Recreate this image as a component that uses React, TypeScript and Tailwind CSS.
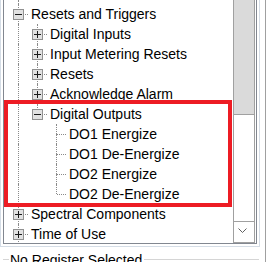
import React from 'react';

type Row = {
  label: string;
  guides: boolean[]; // ancestor columns: draw a full vertical line?
  box?: 'plus' | 'minus';
  hasNext: boolean;
};

const rows: Row[] = [
  { label: 'Resets and Triggers', guides: [], box: 'minus', hasNext: true },
  { label: 'Digital Inputs', guides: [true], box: 'plus', hasNext: true },
  { label: 'Input Metering Resets', guides: [true], box: 'plus', hasNext: true },
  { label: 'Resets', guides: [true], box: 'plus', hasNext: true },
  { label: 'Acknowledge Alarm', guides: [true], box: 'plus', hasNext: true },
  { label: 'Digital Outputs', guides: [true], box: 'minus', hasNext: false },
  { label: 'DO1 Energize', guides: [true, false], hasNext: true },
  { label: 'DO1 De-Energize', guides: [true, false], hasNext: true },
  { label: 'DO2 Energize', guides: [true, false], hasNext: true },
  { label: 'DO2 De-Energize', guides: [true, false], hasNext: false },
  { label: 'Spectral Components', guides: [], box: 'plus', hasNext: true },
  { label: 'Time of Use', guides: [], box: 'plus', hasNext: true },
];

const Guide = ({ full }: { full: boolean }) => (
  <div className="relative w-[19px] h-full shrink-0">
    {full && <div className="absolute left-[9px] top-0 h-full border-l border-dotted border-[#8a8a8a]" />}
  </div>
);

const Joint = ({ box, hasNext }: { box?: 'plus' | 'minus'; hasNext: boolean }) => (
  <div className="relative w-[19px] h-[20px] shrink-0">
    <div className="absolute left-[9px] top-0 h-[10px] border-l border-dotted border-[#8a8a8a]" />
    {hasNext && <div className="absolute left-[9px] top-[10px] h-[10px] border-l border-dotted border-[#8a8a8a]" />}
    <div className="absolute left-[10px] top-[10px] w-[9px] border-t border-dotted border-[#8a8a8a]" />
    {box && (
      <div className="absolute left-[4px] top-[5px] w-[11px] h-[11px] border border-[#919191] bg-[#e1e1e1]">
        <div className="absolute left-[1px] top-[4px] w-[7px] h-px bg-[#1a1a1a]" />
        {box === 'plus' && <div className="absolute left-[4px] top-[1px] w-px h-[7px] bg-[#1a1a1a]" />}
      </div>
    )}
  </div>
);

const TreeRow = ({ row }: { row: Row }) => (
  <div className="flex h-[20px] pl-[5px]">
    {row.guides.map((g, i) => <Guide key={i} full={g} />)}
    <Joint box={row.box} hasNext={row.hasNext} />
    <span className="pl-[3px] leading-[20px] whitespace-nowrap">{row.label}</span>
  </div>
);

const Scrollbar = () => (
  <div className="w-[22px] shrink-0 flex flex-col border-x border-b border-[#a0a0a0]">
    <div className="h-[115px] bg-[#dadada] border-b border-[#a0a0a0]" />
    <div className="flex-1" />
    <div className="h-[21px] border-t border-[#a0a0a0] pl-[4px] pt-[6px]">
      <svg width="9" height="5" viewBox="0 0 9 5" className="block">
        <polyline points="0.5,0.5 4.5,4.5 8.5,0.5" fill="none" stroke="#606060" strokeWidth="1" />
      </svg>
    </div>
  </div>
);

export default function App() {
  return (
    <div className="relative w-[268px] h-[262px] overflow-hidden bg-white flex font-['Liberation_Sans',Arial,sans-serif] text-[14px] text-black">
      <div className="w-[260px] shrink-0 flex flex-col">
        <div className="h-[247px] shrink-0 border-x border-b border-[#d5dde6] px-[2px] pb-[2px]">
          <div className="h-full flex border-x border-b border-[#828790]">
            <div className="flex-1 overflow-hidden">
              <div className="flex h-[4px] pl-[5px]">
                <Guide full />
              </div>
              {rows.map(r => <TreeRow key={r.label} row={r} />)}
            </div>
            <Scrollbar />
            <div className="w-px shrink-0" />
          </div>
        </div>

        {/* group box caption, cut off by the window */}
        <div className="mt-[5px] flex items-start h-[16px]">
          <div className="ml-[3px] w-[6px] mt-[7px] h-px bg-[#d5d5d5]" />
          <span className="pl-[1px] leading-[16px] whitespace-nowrap">No Register Selected</span>
          <div className="flex-1 ml-[2px] mr-[1px] mt-[7px] h-px bg-[#d5d5d5]" />
        </div>
      </div>
      <div className="w-[5px] shrink-0" />
      <div className="w-px shrink-0 bg-[#a0a0a0]" />

      {/* red annotation frame */}
      <div className="absolute left-[4px] top-[100px] w-[228px] h-[107px] border-4 border-[#ed1c24]" />
    </div>
  );
}
